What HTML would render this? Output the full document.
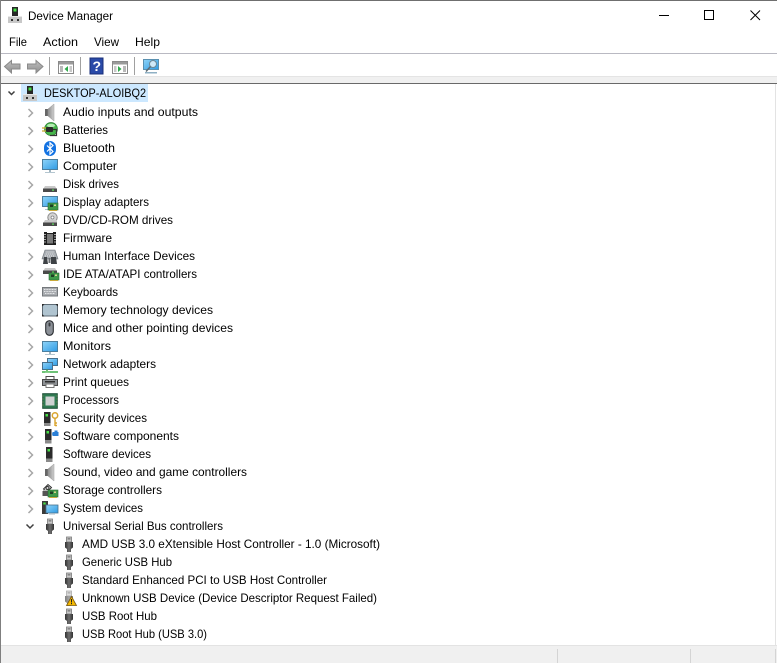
<!DOCTYPE html>
<html lang="en">
<head>
<meta charset="utf-8">
<title>Device Manager</title>
<style>
html,body{margin:0;padding:0;background:#fff;width:777px;height:663px;overflow:hidden}
svg{display:block}
text{font-family:"Liberation Sans",sans-serif;font-size:12px;fill:#000}
</style>
</head>
<body>
<svg width="777" height="663" viewBox="0 0 777 663" xmlns="http://www.w3.org/2000/svg" shape-rendering="geometricPrecision">
<defs>
<linearGradient id="scr" x1="0" y1="0" x2="1" y2="1"><stop offset="0" stop-color="#8fd4f8"/><stop offset="1" stop-color="#2f9be4"/></linearGradient>
<linearGradient id="spk" x1="0" y1="0" x2="1" y2="0"><stop offset="0" stop-color="#8c8c8c"/><stop offset="1" stop-color="#d0d0d0"/></linearGradient>
<linearGradient id="usbh" x1="0" y1="0" x2="1" y2="0"><stop offset="0" stop-color="#333"/><stop offset=".5" stop-color="#6e6e6e"/><stop offset="1" stop-color="#333"/></linearGradient>
<linearGradient id="arw" x1="0" y1="0" x2="0" y2="1"><stop offset="0" stop-color="#c0c0c0"/><stop offset="1" stop-color="#8e8e8e"/></linearGradient>
<symbol id="usb" viewBox="0 0 16 16" width="16" height="16" overflow="visible">
<rect x="5.500" y="1" width="5" height="5" fill="#c8c8c8" stroke="#7a7a7a" stroke-width=".8"/>
<rect x="6.700" y="2.200" width="1" height="1.300" fill="#555"/><rect x="8.300" y="2.200" width="1" height="1.300" fill="#555"/>
<path d="M4 6h8v5.500l-2 1.500v3H6v-3l-2-1.500z" fill="url(#usbh)"/>
</symbol>
<symbol id="spkr" viewBox="0 0 16 16" width="16" height="16" overflow="visible">
<rect x="3" y="5" width="3" height="7" fill="#666"/>
<path d="M6 5l6-5v17l-6-5z" fill="url(#spk)" stroke="#9a9a9a" stroke-width=".5"/>
</symbol>
<symbol id="mon" viewBox="0 0 16 16" width="16" height="16" overflow="visible">
<rect x=".5" y=".5" width="15" height="10" fill="url(#scr)" stroke="#4c7f9e"/>
<rect x="7" y="11" width="2" height="2" fill="#9fb4c0"/>
<rect x="3" y="13" width="10" height="1" fill="#b4c6d0"/>
</symbol>
<symbol id="drive" viewBox="0 0 16 16" width="16" height="16" overflow="visible">
<path d="M3 0h10l1.500 2.500H1.500z" fill="#c9c9c9"/>
<rect x="1" y="2.500" width="14" height="3.500" fill="#4a4a4a"/>
<rect x="10" y="3.500" width="2" height="1.200" fill="#5fe05f"/>
</symbol>
<symbol id="card" viewBox="0 0 16 16" width="16" height="16" overflow="visible">
<rect x="0" y="0" width="10" height="7" fill="#3f9a4a" stroke="#2b6b35" stroke-width=".6"/>
<rect x="2" y="1.500" width="3" height="2.500" fill="#1f3f24"/>
<rect x="6" y="1.500" width="2" height="1.500" fill="#d9d28a"/>
<path d="M1 7h8v1H1z" fill="#c8a93a"/>
</symbol>
<symbol id="tower" viewBox="0 0 16 16" width="16" height="16" overflow="visible">
<rect x="0" y="0" width="6.500" height="11" fill="#2a2a2a"/>
<rect x="1.500" y="2" width="2.500" height="2.500" fill="#46e046"/>
<rect x="0" y="11" width="6.500" height="3.500" fill="#8a8a8a"/>
</symbol>
</defs>

<!-- window frame -->
<rect x="0" y="0" width="777" height="1" fill="#6f6f6f"/>
<rect x="0" y="0" width="1" height="663" fill="#7f7f7f"/>

<!-- title icon -->
<g transform="translate(8,7)">
<rect x="4" y="0" width="6" height="9" fill="#262626"/>
<rect x="5.500" y="1.500" width="3" height="3" fill="#46e046"/>
<path d="M0 9h14v7H0z" fill="#c8c8c8"/><path d="M0 9h14v1H0z" fill="#e8e8e8"/>
<rect x="3" y="12" width="2" height="2" fill="#333"/><rect x="9" y="12" width="2" height="2" fill="#333"/>
</g>
<text x="28" y="20" textLength="85" lengthAdjust="spacingAndGlyphs">Device Manager</text>

<!-- window buttons -->
<rect x="659" y="15" width="10" height="1" fill="#000"/>
<rect x="704.500" y="10.500" width="9" height="9" fill="none" stroke="#000"/>
<path d="M750.500 10.500l9.500 9.500M760 10.500l-9.500 9.500" stroke="#000" fill="none"/>

<!-- menu -->
<text x="9" y="46" textLength="18" lengthAdjust="spacingAndGlyphs">File</text>
<text x="43" y="46" textLength="35" lengthAdjust="spacingAndGlyphs">Action</text>
<text x="94" y="46" textLength="25" lengthAdjust="spacingAndGlyphs">View</text>
<text x="135" y="46" textLength="25" lengthAdjust="spacingAndGlyphs">Help</text>
<rect x="1" y="53" width="776" height="1" fill="#b9b9c2"/>

<!-- toolbar -->
<path d="M4.500 66.500l7-6v3.500h8.500v5h-8.500v4z" fill="url(#arw)" stroke="#8a8a8a"/>
<path d="M43 66.500l-7-6v3.500h-8.500v5H36v4z" fill="url(#arw)" stroke="#8a8a8a"/>
<rect x="49" y="57" width="1" height="18" fill="#a0a0a0"/>
<g transform="translate(58,61)">
<rect x=".5" y=".5" width="15" height="12" fill="#fff" stroke="#8a8a8a"/>
<rect x="1" y="1" width="14" height="2.500" fill="#9a9a9a"/>
<rect x="2" y="5" width="3" height="6" fill="#b8b8b8"/>
<path d="M10 5v6l-3.500-3z" fill="#2fa84a"/>
<rect x="11.500" y="5" width="2.500" height="6" fill="#c8c8c8"/>
</g>
<rect x="80" y="57" width="1" height="18" fill="#a0a0a0"/>
<rect x="90" y="58" width="13" height="16" fill="#2a4aa8" stroke="#1a2f78"/>
<text x="92.500" y="71" style="font-size:14px;font-weight:bold;fill:#fff">?</text>
<g transform="translate(112,61)">
<rect x=".5" y=".5" width="15" height="12" fill="#fff" stroke="#8a8a8a"/>
<rect x="1" y="1" width="14" height="2.500" fill="#9a9a9a"/>
<rect x="2" y="5" width="2.500" height="6" fill="#c8c8c8"/>
<path d="M6 5v6l3.500-3z" fill="#2fa84a"/>
<rect x="11" y="5" width="3" height="6" fill="#b8b8b8"/>
</g>
<rect x="134" y="57" width="1" height="18" fill="#a0a0a0"/>
<g transform="translate(143,59)">
<rect x=".5" y=".5" width="15" height="10" fill="url(#scr)" stroke="#5a90b0"/>
<circle cx="10" cy="5" r="3.500" fill="#cfe9f8" stroke="#6b8796"/>
<path d="M7.500 7.500L3 12.500" stroke="#5c6a72" stroke-width="1.500"/>
<rect x="2" y="13" width="12" height="1.500" fill="#8fb0c4"/>
</g>

<!-- band -->
<rect x="1" y="77" width="776" height="6" fill="#f0f0f0"/>
<rect x="1" y="76" width="776" height="1" fill="#e4e4e4"/>
<rect x="1" y="83" width="776" height="1" fill="#696969"/>
<rect x="775" y="84" width="1" height="562" fill="#e3e3e3"/>

<!-- root -->
<rect x="21" y="84" width="127" height="18" fill="#cce8ff"/>
<path d="M8.500 91.500l3 3 3-3" stroke="#404040" stroke-width="1.500" fill="none"/>
<g transform="translate(23,86)">
<rect x="4" y="0" width="6" height="8" fill="#262626"/>
<rect x="5.500" y="1.500" width="3" height="3" fill="#46e046"/>
<path d="M0 8h14v7H0z" fill="#c8c8c8"/><path d="M0 8h14v1H0z" fill="#e8e8e8"/>
<rect x="3" y="11" width="2" height="2" fill="#333"/><rect x="9" y="11" width="2" height="2" fill="#333"/>
</g>
<text x="44" y="97" textLength="102" lengthAdjust="spacingAndGlyphs">DESKTOP-ALOIBQ2</text>

<!-- chevrons -->
<g fill="none" stroke="#a6a6a6" stroke-width="1.500">
<path d="M28.500 109l4 4-4 4"/><path d="M28.500 127l4 4-4 4"/><path d="M28.500 145l4 4-4 4"/><path d="M28.500 163l4 4-4 4"/>
<path d="M28.500 181l4 4-4 4"/><path d="M28.500 199l4 4-4 4"/><path d="M28.500 217l4 4-4 4"/><path d="M28.500 235l4 4-4 4"/>
<path d="M28.500 253l4 4-4 4"/><path d="M28.500 271l4 4-4 4"/><path d="M28.500 289l4 4-4 4"/><path d="M28.500 307l4 4-4 4"/>
<path d="M28.500 325l4 4-4 4"/><path d="M28.500 343l4 4-4 4"/><path d="M28.500 361l4 4-4 4"/><path d="M28.500 379l4 4-4 4"/>
<path d="M28.500 397l4 4-4 4"/><path d="M28.500 415l4 4-4 4"/><path d="M28.500 433l4 4-4 4"/><path d="M28.500 451l4 4-4 4"/>
<path d="M28.500 469l4 4-4 4"/><path d="M28.500 487l4 4-4 4"/><path d="M28.500 505l4 4-4 4"/>
</g>
<path d="M26.500 524.500l3.500 3.500 3.500-3.500" stroke="#404040" stroke-width="1.500" fill="none"/>

<!-- icons -->
<use href="#spkr" x="42" y="104"/>
<!-- batteries -->
<g transform="translate(42,122)">
<circle cx="9" cy="7" r="6.500" fill="#45b54a" stroke="#2d7e34" stroke-width=".7"/>
<ellipse cx="9" cy="3.500" rx="4" ry="1.800" fill="#b6ecb4"/>
<rect x="4" y="5" width="7" height="5" rx="1" fill="#2a2a2a"/>
<path d="M0 6h4M0 9h4" stroke="#c9a62e" stroke-width="1.200"/>
<path d="M11 7.500h3.500v6H8" stroke="#333" fill="none" stroke-width="1.200"/>
</g>
<!-- bluetooth -->
<g transform="translate(44,141)">
<rect x="0" y="0" width="12" height="15" rx="6" ry="6.500" fill="#1272e2"/>
<path d="M3 4.500l6 6-3 2.800V1.700l3 2.800-6 6" stroke="#fff" stroke-width="1.200" fill="none"/>
</g>
<use href="#mon" x="42" y="159"/>
<use href="#drive" x="42" y="186"/>
<!-- display -->
<use href="#mon" x="42" y="196"/>
<use href="#card" x="48" y="203"/>
<!-- dvd -->
<g transform="translate(42,212)">
<circle cx="10.500" cy="5.500" r="4.700" fill="#d4d4d4" stroke="#8a8a8a"/>
<circle cx="10.500" cy="5.500" r="1.500" fill="#fff" stroke="#7a7a7a" stroke-width=".7"/>
<path d="M3 8h12v2.500H1.500z" fill="#c9c9c9"/>
<rect x="1" y="10.500" width="14" height="3.500" fill="#4a4a4a"/>
<rect x="10" y="11.500" width="2" height="1.200" fill="#5fe05f"/>
</g>
<!-- firmware -->
<g transform="translate(44,232)">
<path d="M0 0h3v1h6V0h3v13H0z" fill="#1f1f1f"/>
<rect x="3" y="2" width="6" height="9.500" fill="#7a7a7a"/>
<path d="M0 2.500h2M0 5h2M0 7.500h2M0 10h2M10 2.500h2M10 5h2M10 7.500h2M10 10h2" stroke="#d8d8d8" stroke-width=".8"/>
</g>
<!-- HID -->
<g transform="translate(42,250)">
<path d="M3 0h10l3 9H0z" fill="#a8adb2" stroke="#6d7378" stroke-width=".6"/>
<path d="M4.500 2h7M3.800 4h8.500M3 6h10" stroke="#e8e8e8" stroke-dasharray="1 1"/>
<path d="M2 7h3l1 7H1zM9 7h5l1 7H9z" fill="#3e4246"/>
<rect x="6.500" y="8" width="2" height="5" fill="#6c7074"/>
</g>
<!-- IDE -->
<use href="#drive" x="42" y="268"/>
<use href="#card" x="49" y="273"/>
<!-- keyboard -->
<g transform="translate(42,287)">
<rect x=".5" y=".5" width="15" height="8.500" fill="#a9acb0" stroke="#74787c"/>
<path d="M2 2.500h12M2 4.500h12M3 6.500h10" stroke="#e6e8ea" stroke-dasharray="1 .6"/>
</g>
<!-- memory -->
<g transform="translate(42,304)">
<rect x=".5" y=".5" width="15" height="11.500" rx="2" fill="#b0c4d0" stroke="#5c6a74"/>
<path d="M0 0h2.500L0 2.500zM16 0h-2.500L16 2.500zM0 12.500h2.500L0 10zM16 12.500h-2.500L16 10z" fill="#2a2a2a"/>
</g>
<!-- mouse -->
<g transform="translate(45,320)">
<rect x=".7" y=".7" width="7.600" height="14.600" rx="3.800" fill="#8b9097" stroke="#2c2f33" stroke-width="1.100"/>
<rect x="3.500" y="2.500" width="2" height="4" rx="1" fill="#3a3d41"/>
</g>
<use href="#mon" x="42" y="341"/>
<!-- network -->
<g transform="translate(42,358)">
<rect x="5.500" y=".5" width="10" height="7" fill="url(#scr)" stroke="#47708c"/>
<rect x=".5" y="4.500" width="10" height="7" fill="url(#scr)" stroke="#47708c"/>
<path d="M5 11.500v2.500M0 14h16" stroke="#3fae4a" stroke-width="1.500"/>
<rect x="3" y="13" width="5" height="1.500" fill="#78c97c"/>
</g>
<!-- print -->
<g transform="translate(42,376)">
<rect x="4" y=".5" width="8" height="3.500" fill="#fff" stroke="#4a4a4a"/>
<rect x=".5" y="3.500" width="15" height="6" fill="#8d9195" stroke="#4a4a4a"/>
<rect x="3" y="5" width="10" height="1.500" fill="#2f2f2f"/>
<rect x="4" y="8" width="8" height="3.500" fill="#fff" stroke="#777"/>
</g>
<!-- processor -->
<g transform="translate(42,393)">
<rect x=".7" y=".7" width="14.600" height="14.600" fill="#2f7a52" stroke="#1c4f36"/>
<rect x="3.500" y="3.500" width="9" height="9" fill="#cfd2d2"/>
<path d="M.5 3h15M.5 6h15M.5 9h15M.5 12h15" stroke="#c9b24a" stroke-width=".4" stroke-dasharray="1.200 12.600"/>
</g>
<!-- security -->
<g transform="translate(44,412)">
<rect x="0" y="0" width="6.500" height="14" fill="#2a2a2a"/>
<rect x="1.500" y="2" width="2.500" height="2.500" fill="#46e046"/>
<rect x="0" y="11" width="6.500" height="3" fill="#8a8a8a"/>
<circle cx="11" cy="3.500" r="2.700" fill="none" stroke="#d9a42e" stroke-width="1.500"/>
<path d="M11 6v8M11 11h2M11 13.500h2" stroke="#d9a42e" stroke-width="1.400"/>
</g>
<!-- software comp -->
<g transform="translate(45,429)">
<use href="#tower"/>
<path d="M7.500 3h2V1.500h3V3h1v4h-6z" fill="#2a7fd6"/>
<circle cx="8" cy="5" r="1" fill="#2a7fd6"/>
</g>
<!-- software dev -->
<g transform="translate(46,447)">
<rect x="0" y="0" width="6.500" height="11.500" fill="#2a2a2a"/>
<rect x="1.500" y="2" width="2.500" height="2.500" fill="#46e046"/>
<rect x="0" y="11.500" width="6.500" height="3.500" fill="#8a8a8a"/>
</g>
<use href="#spkr" x="42" y="464"/>
<!-- storage -->
<g transform="translate(42,483)">
<path d="M1.500 6L6 1.500l3.500 3-4.500 4.500z" fill="#e0e0e0" stroke="#333"/>
<circle cx="5.500" cy="5" r="1.500" fill="none" stroke="#333"/>
<rect x=".5" y="8" width="8" height="5" fill="#555"/>
<path d="M1 7.500h7" stroke="#bbb"/>
<use href="#card" x="6" y="7"/>
</g>
<!-- system -->
<g transform="translate(42,501)">
<rect x="0" y="0" width="6" height="13" fill="#3a3a3a"/>
<rect x="1.300" y="1.500" width="2.400" height="2" fill="#46e046"/>
<rect x="4" y="4" width="12" height="8" fill="url(#scr)" stroke="#47708c" stroke-width=".8"/>
<rect x="7" y="12" width="6" height="1.500" fill="#a8bac6"/>
</g>
<!-- USB -->
<use href="#usb" x="42" y="518"/>
<use href="#usb" x="61" y="536"/>
<use href="#usb" x="61" y="554"/>
<use href="#usb" x="61" y="572"/>
<g opacity=".62"><use href="#usb" x="61" y="590"/></g>
<path d="M71.500 596.500L76.500 605.500H66.500z" fill="#f5b800" stroke="#7a5a10" stroke-width=".8"/>
<rect x="71" y="599" width="1" height="3.500" fill="#222"/><rect x="71" y="603" width="1" height="1.200" fill="#222"/>
<use href="#usb" x="61" y="608"/>
<use href="#usb" x="61" y="626"/>

<!-- labels -->
<text x="63" y="116" textLength="135" lengthAdjust="spacingAndGlyphs">Audio inputs and outputs</text>
<text x="63" y="134" textLength="45" lengthAdjust="spacingAndGlyphs">Batteries</text>
<text x="63" y="152" textLength="52" lengthAdjust="spacingAndGlyphs">Bluetooth</text>
<text x="63" y="170" textLength="54" lengthAdjust="spacingAndGlyphs">Computer</text>
<text x="63" y="188" textLength="56" lengthAdjust="spacingAndGlyphs">Disk drives</text>
<text x="63" y="206" textLength="86" lengthAdjust="spacingAndGlyphs">Display adapters</text>
<text x="63" y="224" textLength="110" lengthAdjust="spacingAndGlyphs">DVD/CD-ROM drives</text>
<text x="63" y="242" textLength="49" lengthAdjust="spacingAndGlyphs">Firmware</text>
<text x="63" y="260" textLength="132" lengthAdjust="spacingAndGlyphs">Human Interface Devices</text>
<text x="63" y="278" textLength="134" lengthAdjust="spacingAndGlyphs">IDE ATA/ATAPI controllers</text>
<text x="63" y="296" textLength="55" lengthAdjust="spacingAndGlyphs">Keyboards</text>
<text x="63" y="314" textLength="150" lengthAdjust="spacingAndGlyphs">Memory technology devices</text>
<text x="63" y="332" textLength="170" lengthAdjust="spacingAndGlyphs">Mice and other pointing devices</text>
<text x="63" y="350" textLength="48" lengthAdjust="spacingAndGlyphs">Monitors</text>
<text x="63" y="368" textLength="93" lengthAdjust="spacingAndGlyphs">Network adapters</text>
<text x="63" y="386" textLength="66" lengthAdjust="spacingAndGlyphs">Print queues</text>
<text x="63" y="404" textLength="56" lengthAdjust="spacingAndGlyphs">Processors</text>
<text x="63" y="422" textLength="84" lengthAdjust="spacingAndGlyphs">Security devices</text>
<text x="63" y="440" textLength="116" lengthAdjust="spacingAndGlyphs">Software components</text>
<text x="63" y="458" textLength="88" lengthAdjust="spacingAndGlyphs">Software devices</text>
<text x="63" y="476" textLength="184" lengthAdjust="spacingAndGlyphs">Sound, video and game controllers</text>
<text x="63" y="494" textLength="99" lengthAdjust="spacingAndGlyphs">Storage controllers</text>
<text x="63" y="512" textLength="80" lengthAdjust="spacingAndGlyphs">System devices</text>
<text x="63" y="530" textLength="160" lengthAdjust="spacingAndGlyphs">Universal Serial Bus controllers</text>
<text x="82" y="548" textLength="298" lengthAdjust="spacingAndGlyphs">AMD USB 3.0 eXtensible Host Controller - 1.0 (Microsoft)</text>
<text x="82" y="566" textLength="90" lengthAdjust="spacingAndGlyphs">Generic USB Hub</text>
<text x="82" y="584" textLength="245" lengthAdjust="spacingAndGlyphs">Standard Enhanced PCI to USB Host Controller</text>
<text x="82" y="602" textLength="295" lengthAdjust="spacingAndGlyphs">Unknown USB Device (Device Descriptor Request Failed)</text>
<text x="82" y="620" textLength="75" lengthAdjust="spacingAndGlyphs">USB Root Hub</text>
<text x="82" y="638" textLength="125" lengthAdjust="spacingAndGlyphs">USB Root Hub (USB 3.0)</text>

<!-- status bar -->
<rect x="1" y="645" width="776" height="1" fill="#e3e3e3"/>
<rect x="1" y="646" width="776" height="17" fill="#f0f0f0"/>
<rect x="557" y="649" width="1" height="14" fill="#d4d4d4"/>
<rect x="690" y="649" width="1" height="14" fill="#d4d4d4"/>
<rect x="775" y="649" width="1" height="14" fill="#d4d4d4"/>
</svg>
</body>
</html>
